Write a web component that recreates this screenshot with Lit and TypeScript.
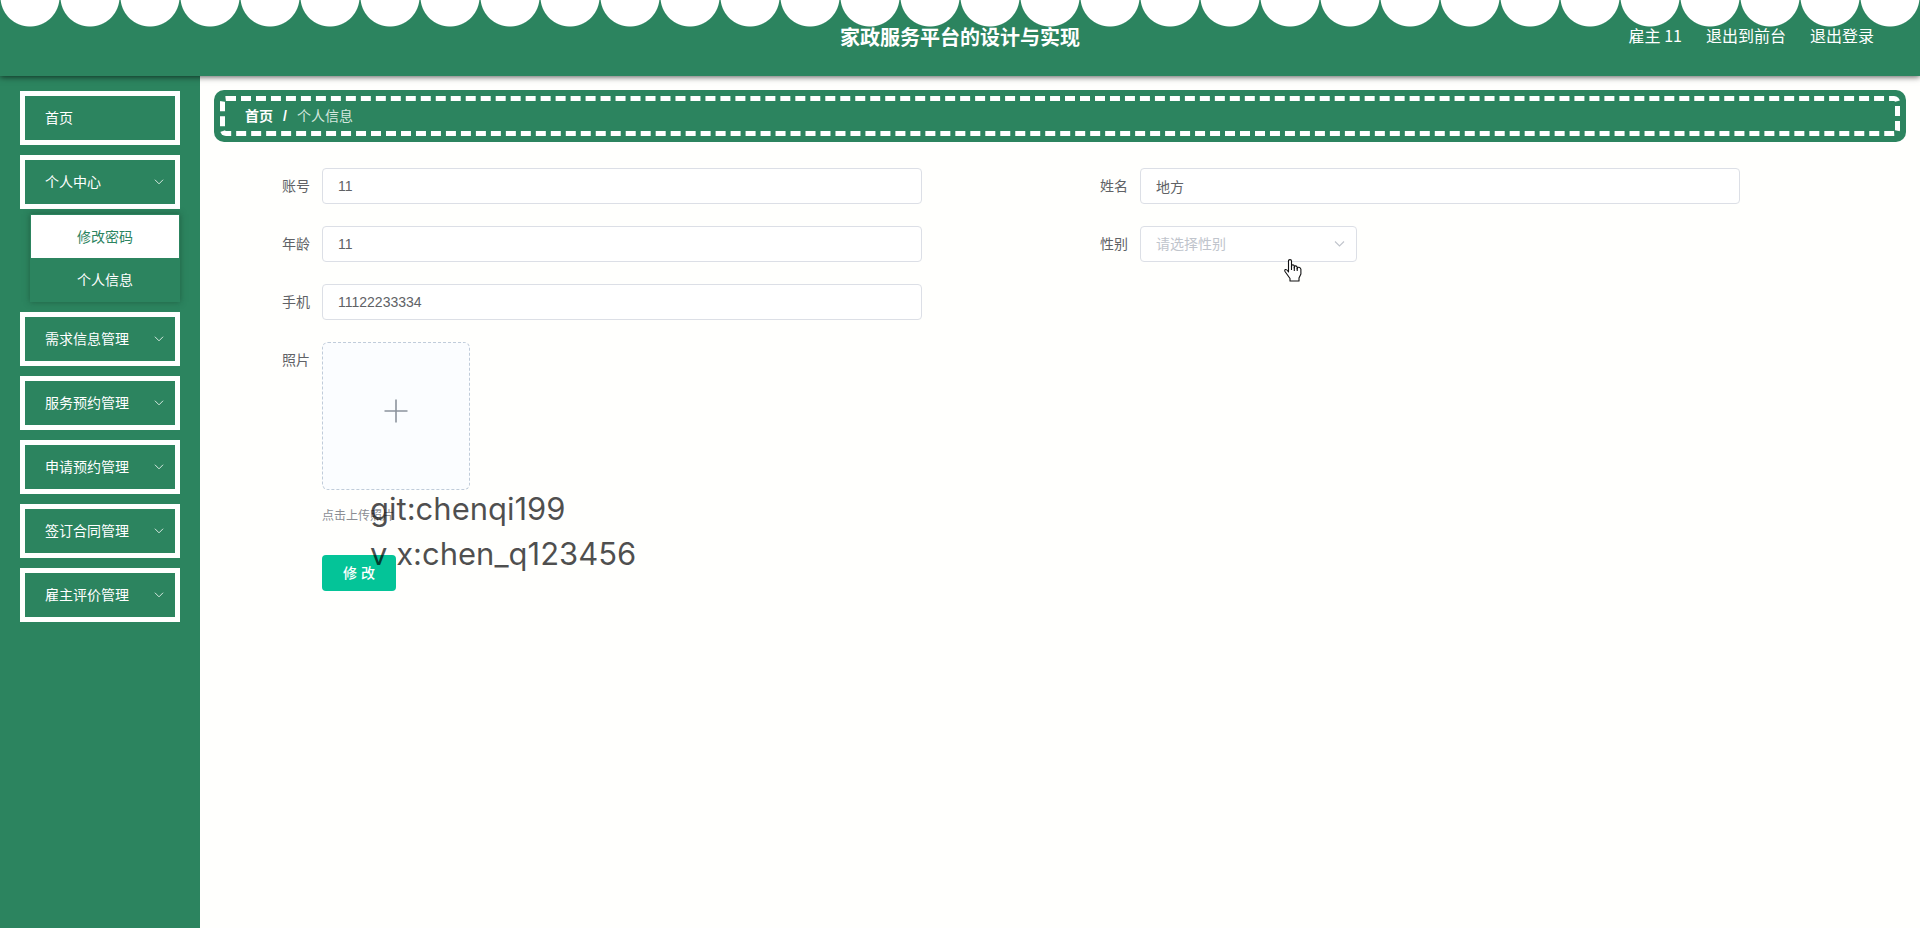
import { LitElement, html, css, svg } from "lit";
import { customElement, property, state } from "lit/decorators.js";
import { classMap } from "lit/directives/class-map.js";

const chevron = svg`<path d="M1 1.5 L5.5 6 L10 1.5" fill="none" stroke="currentColor" stroke-width="1.1" />`;

@customElement("side-menu")
class SideMenu extends LitElement {
  static styles = css`
    :host {
      display: block;
      box-sizing: border-box;
      width: 200px;
      flex: none;
      padding: 15px 20px;
      background: #2c845f;
      color: #fff;
    }
    .menu {
      display: flex;
      flex-direction: column;
      gap: 10px;
    }
    .entry {
      display: flex;
      align-items: center;
      justify-content: space-between;
      box-sizing: border-box;
      width: 100%;
      height: 54px;
      padding: 0 11px 0 20px;
      border: 5px solid #fff;
      background: transparent;
      color: inherit;
      font: inherit;
      text-align: left;
      cursor: pointer;
    }
    .arrow {
      width: 10px;
      height: 8px;
      color: #d5e8df;
    }
    .sub {
      display: flex;
      flex-direction: column;
      margin: 5px 0 0 10px;
      padding: 1px;
      box-shadow: 0 0 6px rgba(20, 60, 40, 0.5);
    }
    .link {
      height: 43px;
      line-height: 44px;
      color: #fff;
      text-align: center;
      text-decoration: none;
    }
    .link.hover {
      background: #fff;
      color: #2c845f;
    }
  `;

  @state() open = "个人中心";

  groups = ["需求信息管理", "服务预约管理", "申请预约管理", "签订合同管理", "雇主评价管理"];
  links = [
    { text: "修改密码", hover: true },
    { text: "个人信息", hover: false },
  ];

  toggle(name: string) {
    this.open = this.open === name ? "" : name;
  }

  entry(name: string) {
    return html`<button class="entry" type="button" @click=${() => this.toggle(name)}>
      <span>${name}</span>
      <svg class="arrow" viewBox="0 0 11 8" aria-hidden="true">${chevron}</svg>
    </button>`;
  }

  render() {
    return html`<nav class="menu">
      <button class="entry" type="button"><span>首页</span></button>
      <div>
        ${this.entry("个人中心")}
        ${this.open === "个人中心"
          ? html`<div class="sub">
              ${this.links.map(
                (l) => html`<a class=${classMap({ link: true, hover: l.hover })} href="#">${l.text}</a>`
              )}
            </div>`
          : ""}
      </div>
      ${this.groups.map((g) => this.entry(g))}
    </nav>`;
  }
}

@customElement("profile-form")
class ProfileForm extends LitElement {
  static styles = css`
    :host {
      display: block;
      padding: 26px 28px;
      color: #606266;
    }
    .grid {
      display: grid;
      grid-template-columns: 1fr 1fr;
      row-gap: 22px;
    }
    .field {
      display: flex;
      align-items: flex-start;
    }
    .wide {
      grid-column: 1 / -1;
    }
    .start {
      grid-column: 1;
    }
    .label {
      box-sizing: border-box;
      width: 80px;
      padding-right: 12px;
      line-height: 36px;
      text-align: right;
    }
    .input,
    .select {
      box-sizing: border-box;
      width: 600px;
      max-width: calc(100% - 80px);
      height: 36px;
      padding: 0 15px;
      border: 1px solid #dcdfe6;
      border-radius: 4px;
      background: #fff;
      color: #606266;
      font: inherit;
      outline: none;
    }
    .picker {
      display: grid;
      align-items: center;
      width: 217px;
    }
    .select {
      grid-area: 1 / 1;
      width: 100%;
      max-width: none;
      appearance: none;
      color: #c0c4cc;
    }
    .caret {
      grid-area: 1 / 1;
      justify-self: end;
      width: 11px;
      height: 8px;
      margin-right: 12px;
      color: #c0c4cc;
      pointer-events: none;
    }
    .upload {
      display: flex;
      align-items: center;
      justify-content: center;
      box-sizing: border-box;
      width: 148px;
      height: 148px;
      padding: 0 0 11px;
      border: 1px dashed #c0ccda;
      border-radius: 6px;
      background: #fbfdff;
      color: #8c939d;
      cursor: pointer;
    }
    .plus {
      width: 24px;
      height: 24px;
    }
    .tip {
      margin-top: 18px;
      color: #8a8d93;
      font-size: 12px;
      line-height: 16px;
    }
    .submit {
      height: 36px;
      width: 74px;
      margin: 31px 0 0 80px;
      padding: 0;
      border: 0;
      border-radius: 4px;
      background: #04c498;
      color: #fff;
      font: inherit;
      font-weight: 500;
      cursor: pointer;
    }
  `;

  text(id: string, label: string, value: string, start = false) {
    return html`<div class=${classMap({ field: true, start })}>
      <label class="label" for=${id}>${label}</label>
      <input class="input" id=${id} type="text" .value=${value} />
    </div>`;
  }

  render() {
    return html`<form @submit=${(e: Event) => e.preventDefault()}>
      <div class="grid">
        ${this.text("account", "账号", "11")} ${this.text("name", "姓名", "地方")}
        ${this.text("age", "年龄", "11")}
        <div class="field">
          <label class="label" for="gender">性别</label>
          <div class="picker">
            <select class="select" id="gender">
              <option value="" selected>请选择性别</option>
              <option>男</option>
              <option>女</option>
            </select>
            <svg class="caret" viewBox="0 0 11 8" aria-hidden="true">${chevron}</svg>
          </div>
        </div>
        ${this.text("phone", "手机", "11122233334", true)}
        <div class="field wide">
          <label class="label" for="photo">照片</label>
          <div>
            <button class="upload" id="photo" type="button">
              <svg class="plus" viewBox="0 0 24 24" aria-hidden="true">
                <path d="M12 0.5V23.5M0.5 12H23.5" fill="none" stroke="currentColor" stroke-width="1.6" />
              </svg>
            </button>
            <div class="tip">点击上传照片</div>
          </div>
        </div>
      </div>
      <button class="submit" type="submit">修 改</button>
    </form>`;
  }
}

@customElement("app-root")
class AppRoot extends LitElement {
  static styles = css`
    :host {
      display: flex;
      flex-direction: column;
      position: relative;
      min-height: 100vh;
      background: #fff;
      font: 14px/20px "Liberation Sans", "Noto Sans CJK SC", sans-serif;
    }
    .header {
      display: grid;
      grid-template-columns: 1fr auto 1fr;
      align-items: center;
      box-sizing: border-box;
      height: 76px;
      padding: 0 46px 2px;
      background: radial-gradient(circle at 30px -3px, #fff 29px, transparent 30px) 0 0 / 60px 76px repeat-x #2c845f;
      box-shadow: 0 1px 6px rgba(0, 0, 0, 0.65);
      color: #fff;
      font-family: "Noto Sans CJK SC", sans-serif;
      z-index: 1;
    }
    .title {
      grid-column: 2;
      margin: 0;
      font-size: 20px;
      line-height: 28px;
    }
    .account {
      display: flex;
      justify-content: flex-end;
      gap: 24px;
      padding-bottom: 4px;
      font-size: 16px;
      line-height: 24px;
    }
    .action {
      color: inherit;
      text-decoration: none;
    }
    .body {
      display: flex;
      flex: 1;
    }
    .main {
      flex: 1;
      min-width: 0;
      padding: 14px;
      background: #fffffd;
    }
    .crumbs {
      padding: 6px;
      border-radius: 10px;
      background: #2c845f;
      color: #fff;
    }
    .trail {
      display: flex;
      align-items: center;
      gap: 10px;
      box-sizing: border-box;
      height: 40px;
      padding: 0 20px;
      border: 5px dashed #fff;
      border-radius: 6px;
    }
    .home {
      color: #fff;
      font-weight: 700;
      text-decoration: none;
    }
    .slash {
      font-weight: 700;
    }
    .here {
      color: #d5e8df;
    }
    .watermark {
      position: absolute;
      left: 370px;
      top: 486px;
      margin: 0;
      color: rgba(0, 0, 0, 0.7);
      font: 400 31px/45px Inter, sans-serif;
      pointer-events: none;
    }
    .pointer {
      position: absolute;
      left: 1284px;
      top: 259px;
      width: 18px;
      height: 23px;
      pointer-events: none;
    }
  `;

  @property() user = "11";

  render() {
    return html`
      <header class="header">
        <h1 class="title">家政服务平台的设计与实现</h1>
        <div class="account">
          <span>雇主 ${this.user}</span>
          <a class="action" href="#">退出到前台</a>
          <a class="action" href="#">退出登录</a>
        </div>
      </header>
      <div class="body">
        <side-menu></side-menu>
        <main class="main">
          <div class="crumbs">
            <div class="trail">
              <a class="home" href="#">首页</a>
              <span class="slash">/</span>
              <span class="here">个人信息</span>
            </div>
          </div>
          <profile-form></profile-form>
        </main>
      </div>
      <p class="watermark">git:chenqi199<br />v x:chen_q123456</p>
      <svg class="pointer" viewBox="0 0 18 23" aria-hidden="true">
        <path
          d="M4.5 13V2Q4.5 0.6 6 0.6T7.5 2V8Q7.5 5.6 9 5.9T10.3 7.5V9Q10.4 6.6 11.8 6.9T13.2 8.6V10Q13.4 8 14.9 8.3T16.9 10.2V15L15 19V22H6V19.5L3.5 16L1 12.5Q0.3 10.8 1.6 10.5T4.5 13Z"
          fill="#fff" stroke="#111" stroke-width="1.1" stroke-linejoin="round" />
        <path d="M7.5 7V11M10.3 8V12M13.2 9V12" fill="none" stroke="#111" stroke-width="1.1" />
      </svg>
    `;
  }
}
